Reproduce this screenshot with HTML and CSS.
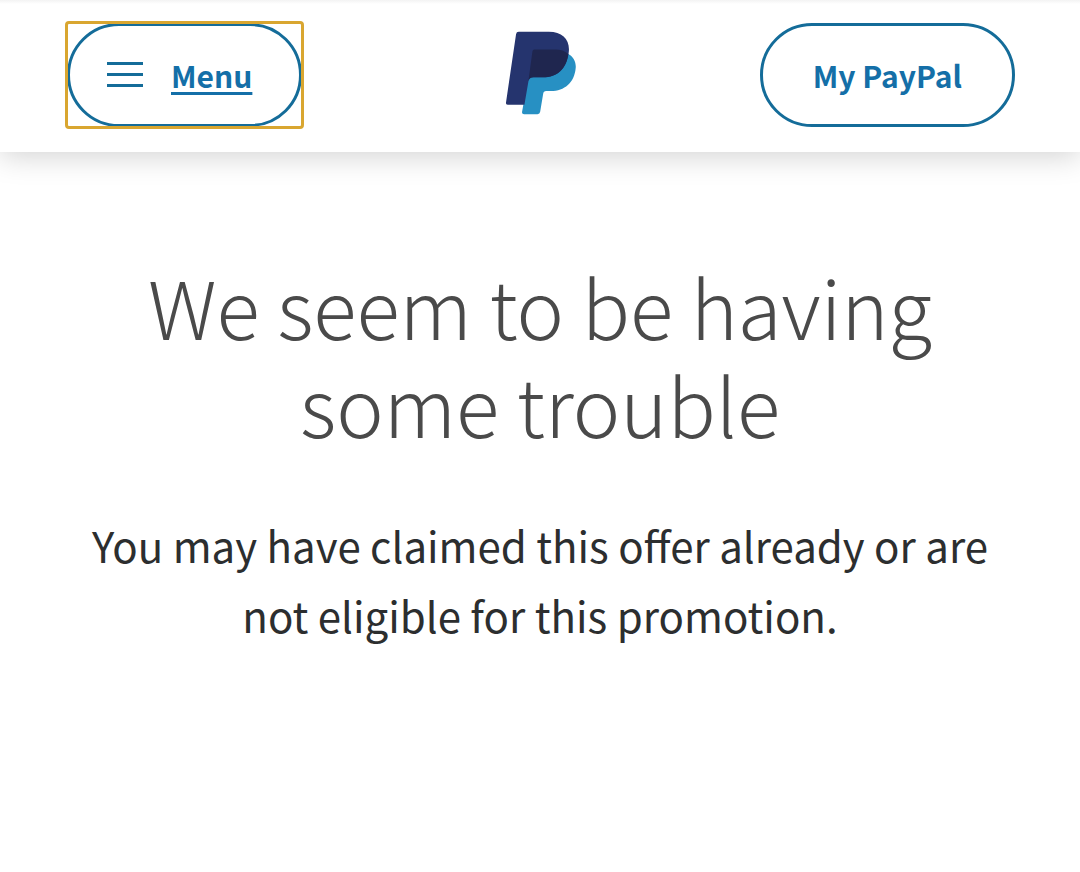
FILE: index.html
```html
<!doctype html>
<html lang="en">
  <head>
    <meta charset="utf-8">
    <meta name="viewport" content="width=device-width, initial-scale=1.0">
    <title>PayPal</title>
    <link rel="stylesheet" href="styles.css">
  </head>
  <body>
    <header class="header">
      <div class="header-side">
        <div class="focus-ring">
          <button class="pill menu-button" type="button">
            <svg class="menu-icon" viewBox="0 0 36 26" aria-hidden="true">
              <path d="M0 1.5h36M0 12.5h36M0 23.5h36"/>
            </svg>
            <span class="menu-label">Menu</span>
          </button>
        </div>
      </div>

      <a class="logo" href="#" aria-label="PayPal">
        <svg viewBox="50 50 209 248" aria-hidden="true">
          <path fill="#2790c3" d="M236 117C252 126 260 142 258 160C254 203 225 228 184 228H170Q162 228 161 236L152 290Q151 297 144 297H104Q97 297 98 290L132 104H210Z"/>
          <path fill="#25346e" d="M88 51H178C220 51 243 76 237 115C231 160 204 187 160 187H132Q120 187 117 199L105 269H56Q49 269 50 262L80 58Q81 51 88 51Z"/>
          <path fill="#1f264f" d="M134 104H198Q220 104 236 117C230 161 203 187 160 187H132Q120 187 117 197L129 109Q130 104 134 104Z"/>
        </svg>
      </a>

      <div class="header-side header-side-right">
        <a class="pill account-link" href="#">My PayPal</a>
      </div>
    </header>

    <main class="message">
      <h1>We seem to be having some trouble</h1>
      <p>You may have claimed this offer already or are not eligible for this promotion.</p>
    </main>
  </body>
</html>
```

FILE: styles.css
```css
* {
  box-sizing: border-box;
}

body {
  margin: 0;
  background: #fff;
  color: #2c2e2f;
  font-family: "Noto Sans CJK SC", "Open Sans", sans-serif;
}

.header {
  display: flex;
  align-items: flex-start;
  height: 152px;
  padding: 23px 65px 0 67px;
  background: linear-gradient(#f3f3f3, #fff 4px);
  box-shadow: 0 4px 28px rgba(0, 0, 0, 0.18);
}

.header-side {
  display: flex;
  flex: 1;
}

.header-side-right {
  justify-content: flex-end;
}

.focus-ring {
  border-radius: 2px;
  outline: 3px solid #d9a630;
  outline-offset: -1px;
}

.pill {
  display: flex;
  align-items: center;
  height: 104px;
  border: 3px solid #146c99;
  border-radius: 52px;
  background: transparent;
  color: #146fa8;
  font-family: inherit;
  font-size: 30px;
  font-weight: 700;
  line-height: 48px;
  text-decoration: none;
}

.menu-button {
  gap: 28px;
  padding: 0 47px 0 37px;
}

.menu-icon {
  width: 36px;
  height: 26px;
  fill: none;
  stroke: #146c99;
  stroke-width: 3px;
}

.menu-label {
  text-decoration: underline;
  text-decoration-thickness: 3px;
  text-underline-offset: 4px;
}

.account-link {
  padding: 0 50px;
}

.logo {
  margin-top: 8px;
}

.logo svg {
  display: block;
  width: 70px;
  height: 84px;
}

.message {
  padding: 104px 64px;
  text-align: center;
}

.message h1 {
  max-width: 860px;
  margin: 0 auto 58px;
  color: #4a4a4a;
  font-size: 80px;
  font-weight: 300;
  line-height: 98px;
}

.message p {
  margin: 0;
  font-size: 42px;
  line-height: 70px;
}
```
